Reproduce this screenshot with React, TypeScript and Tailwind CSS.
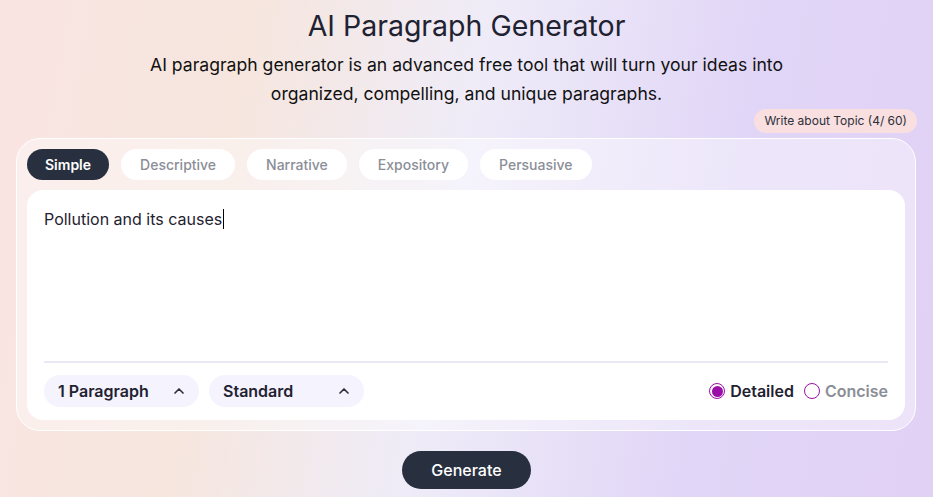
import { ChevronUp } from "lucide-react"

const tabs = ["Simple", "Descriptive", "Narrative", "Expository", "Persuasive"]

const Dropdown = ({ label }: { label: string }) => (
    <button className="flex h-8 w-[155px] items-center justify-between rounded-full bg-[#f5f3fe] pl-[14px] pr-[12px] text-[16px] font-semibold text-[#1f2230]">
        <span>{label}</span>
        <ChevronUp size={16} strokeWidth={2.5} className="text-[#2b2f3a]" />
    </button>
)

const App = () => {
    return (
        <div
            className="h-[497px] w-full overflow-hidden bg-[linear-gradient(100deg,#fae4e2_0%,#f6e6de_25%,#efecf8_48%,#e1d6f7_75%,#e1d1f5_100%)] text-[#1f2230]"
            style={{ fontFamily: "Inter, 'Noto Sans', sans-serif" }}
        >
            <div className="flex flex-col items-center pt-[8px]">
                <h1 className="text-[28.5px] leading-[36px] font-normal text-[#1f2230]">AI Paragraph Generator</h1>
                <p className="mt-[6px] w-[660px] text-center text-[17.6px] leading-[29px] text-[#111]">
                    AI paragraph generator is an advanced free tool that will turn your ideas into organized, compelling, and unique paragraphs.
                </p>
            </div>
            <div className="mx-[16px] mt-[1px] flex justify-end">
                <span className="rounded-full bg-[#f9dfe0] px-[10px] py-[4px] text-[12px] leading-[16px] text-[#2b2f3a]">
                    Write about Topic (4/ 60)
                </span>
            </div>
            <div className="mx-[16px] mt-[5px] w-[900px] rounded-[24px] border border-white bg-white/40 p-[10px]">
                <div className="flex gap-[12px]">
                    {tabs.map((t, i) => (
                        <button
                            key={t}
                            className={
                                i === 0
                                    ? "h-[31px] rounded-full bg-[#283040] px-[18px] text-[14px] font-semibold text-white"
                                    : "h-[31px] rounded-full bg-white px-[19px] text-[14px] font-medium text-[#8b8e97]"
                            }
                        >
                            {t}
                        </button>
                    ))}
                </div>
                <div className="mt-[10px] flex h-[230px] flex-col rounded-[16px] bg-white px-[17px] pt-[15px] pb-[13px]">
                    <div className="flex-1 text-[16px] leading-[22px] text-[#1f2230]">
                        Pollution and its causes<span className="ml-px inline-block h-[20px] w-px translate-y-[4px] bg-black" />
                    </div>
                    <div className="h-[2px] bg-[#eae8f5]" />
                    <div className="mt-[12px] flex items-center gap-[10px]">
                        <Dropdown label="1 Paragraph" />
                        <Dropdown label="Standard" />
                        <div className="ml-auto flex items-center gap-[10px] text-[16px] font-semibold">
                            <label className="flex items-center gap-[5px] text-[#1f2230]">
                                <span className="flex h-[16px] w-[16px] items-center justify-center rounded-full border border-[#9b0fa8]">
                                    <span className="h-[11px] w-[11px] rounded-full bg-[#9b0fa8]" />
                                </span>
                                Detailed
                            </label>
                            <label className="flex items-center gap-[5px] text-[#8b8e97]">
                                <span className="h-[16px] w-[16px] rounded-full border border-[#9b0fa8]" />
                                Concise
                            </label>
                        </div>
                    </div>
                </div>
            </div>
            <div className="mt-[20px] flex justify-center">
                <button className="h-[38px] w-[129px] rounded-full bg-[#283040] text-[16px] font-medium text-white">Generate</button>
            </div>
        </div>
    )
}
export default App
